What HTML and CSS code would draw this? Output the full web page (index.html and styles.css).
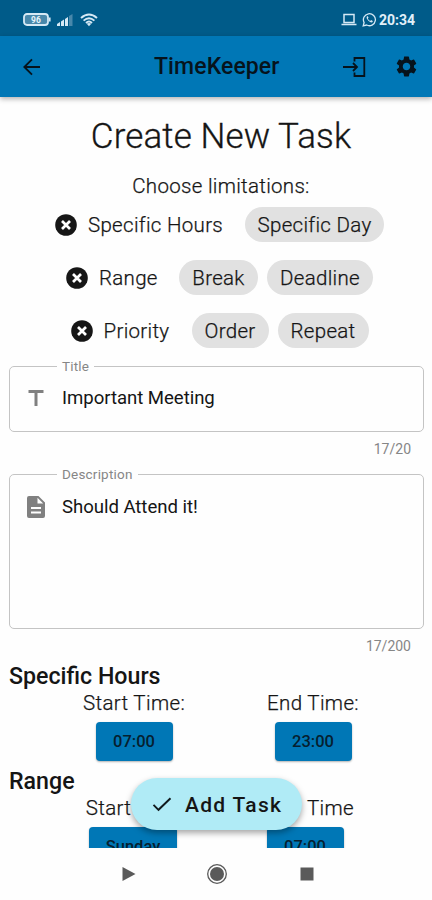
FILE: index.html
```html
<!DOCTYPE html>
<html lang="en">
<head>
<meta charset="utf-8">
<title>TimeKeeper</title>
<link rel="stylesheet" href="styles.css">
</head>
<body>
<div class="phone">
  <div class="status">
    <svg class="battery" width="28" height="13" viewBox="0 0 28 13"><rect x="1" y="1" width="24" height="11" rx="3" fill="#4888ab" stroke="#d5e9f5" stroke-width="1.8"/><path d="M26 4.5h1.6v4H26z" fill="#d5e9f5"/><text x="13" y="9.8" text-anchor="middle" class="battery-text">96</text></svg>
    <svg class="signal" width="16" height="12" viewBox="0 0 16 12"><path d="M0 12V10l3-2v4zM4 12V7.500l3-2V12zM8 12V5l3-2v9z" fill="#d5e9f5"/><path d="M12 12V2l3.500-2v12z" fill="#4888ab"/></svg>
    <svg class="wifi" width="18" height="14" viewBox="0 0 18 14"><g fill="none" stroke="#d5e9f5" stroke-width="1.900"><path d="M1 5Q9-2 17 5"/><path d="M3.600 7.600Q9 3 14.400 7.600"/><path d="M6 10Q9 7.200 12 10"/></g><path d="M6.800 10.800Q9 9.300 11.200 10.800L9 13.200z" fill="#d5e9f5"/></svg>
    <span class="spacer"></span>
    <svg class="laptop" width="16" height="13" viewBox="0 0 16 13"><path d="M3 1.500h10v8H3zM.5 11.500h15" fill="none" stroke="#d5e9f5" stroke-width="1.500"/></svg>
    <svg class="chat" width="15" height="15" viewBox="0 0 15 15"><path d="M1.200 13.800l.9-3.300A6 6 0 1 1 4.600 13z" fill="none" stroke="#d5e9f5" stroke-width="1.300"/><path d="M5.300 4.200c-.8.500-.9 1.600-.2 2.900s1.700 2.300 3 3c1.200.6 2.200.4 2.700-.5l-.1-.7-1.600-.8-.9.900c-1.100-.5-1.900-1.300-2.400-2.400l.7-.8-.6-1.600z" fill="#d5e9f5"/></svg>
    <span class="clock">20:34</span>
  </div>
  <header class="appbar">
    <svg class="back" width="18" height="18" viewBox="0 0 18 18"><path d="M17 9H1.500M9 1.300L1.300 9 9 16.700" fill="none" stroke="#06131c" stroke-width="1.900"/></svg>
    <h1 class="brand">TimeKeeper</h1>
    <svg class="login" width="23" height="20" viewBox="0 0 23 20"><path d="M0 10h14M10 6l4 4-4 4M11.500 4.500V1h9.800v18h-9.800v-3.500" fill="none" stroke="#06131c" stroke-width="1.800"/></svg>
    <svg class="gear" width="25" height="25" viewBox="0 0 24 24"><path fill="#06131c" d="M19.140 12.940c.04-.3.060-.61.060-.94 0-.32-.02-.64-.07-.94l2.030-1.580a.49.490 0 0 0 .12-.61l-1.920-3.320a.488.488 0 0 0-.59-.22l-2.390.96c-.5-.38-1.030-.7-1.620-.94l-.36-2.540a.484.484 0 0 0-.48-.41h-3.840c-.24 0-.43.170-.47.410l-.36 2.540c-.59.240-1.130.570-1.620.940l-2.390-.96c-.22-.08-.47 0-.59.220L2.740 8.870c-.12.210-.08.470.12.610l2.030 1.580c-.05.300-.09.630-.09.940s.02.640.07.940l-2.030 1.580a.49.490 0 0 0-.12.610l1.920 3.320c.12.220.37.290.59.220l2.390-.96c.5.380 1.030.7 1.620.94l.36 2.540c.05.240.24.410.48.410h3.840c.24 0 .44-.17.470-.41l.36-2.540c.59-.24 1.130-.56 1.620-.94l2.390.96c.22.080.47 0 .59-.22l1.920-3.320c.12-.22.070-.47-.12-.61l-2.010-1.580zM12 15.600c-1.980 0-3.600-1.620-3.600-3.600s1.620-3.600 3.600-3.600 3.600 1.620 3.600 3.600-1.620 3.600-3.600 3.600z"/></svg>
  </header>
  <main class="content">
    <h2 class="page-title">Create New Task</h2>
    <p class="hint">Choose limitations:</p>
    <div class="chips row-hours">
      <span class="picked"><svg class="x" viewBox="0 0 22 22"><circle cx="11" cy="11" r="10.800" fill="#161616"/><path d="M7 7l8 8M15 7l-8 8" stroke="#fff" stroke-width="2.700"/></svg><span class="t-hours">Specific Hours</span></span>
      <span class="chip w-day">Specific Day</span>
    </div>
    <div class="chips row-range">
      <span class="picked"><svg class="x" viewBox="0 0 22 22"><circle cx="11" cy="11" r="10.800" fill="#161616"/><path d="M7 7l8 8M15 7l-8 8" stroke="#fff" stroke-width="2.700"/></svg><span class="t-range">Range</span></span>
      <span class="chip w-break">Break</span>
      <span class="chip w-deadline">Deadline</span>
    </div>
    <div class="chips row-priority">
      <span class="picked"><svg class="x" viewBox="0 0 22 22"><circle cx="11" cy="11" r="10.800" fill="#161616"/><path d="M7 7l8 8M15 7l-8 8" stroke="#fff" stroke-width="2.700"/></svg><span class="t-priority">Priority</span></span>
      <span class="chip w-order">Order</span>
      <span class="chip w-repeat">Repeat</span>
    </div>
    <fieldset class="field field-title">
      <legend>Title</legend>
      <div class="entry"><svg width="22" height="22" viewBox="0 0 22 22"><path d="M3.500 3h15v3h-6v13h-3V6h-6z" fill="#808080"/></svg><span>Important Meeting</span></div>
    </fieldset>
    <p class="count count-title">17/20</p>
    <fieldset class="field field-desc">
      <legend>Description</legend>
      <div class="entry"><svg width="22" height="22" viewBox="0 0 22 22"><path fill="#808080" fill-rule="evenodd" d="M4 0h9.500L20 6.500V20a2 2 0 0 1-2 2H4a2 2 0 0 1-2-2V2a2 2 0 0 1 2-2zM12.500 1.800V7.500h5.700zM6 11v2h10v-2zM6 15.500v2h10v-2z"/></svg><span>Should Attend it!</span></div>
    </fieldset>
    <p class="count count-desc">17/200</p>
    <h3 class="section">Specific Hours</h3>
    <div class="times times-hours">
      <div class="col"><span class="time-label">Start Time:</span><button class="btn">07:00</button></div>
      <div class="col"><span class="time-label">End Time:</span><button class="btn">23:00</button></div>
    </div>
    <h3 class="section section-range">Range</h3>
    <div class="times times-range">
      <div class="col"><span class="time-label label-day">Start Day:</span><button class="btn btn-day">Sunday</button></div>
      <div class="col"><span class="time-label label-time">Time</span><button class="btn">07:00</button></div>
    </div>
  </main>
  <button class="fab"><svg width="20" height="15" viewBox="0 0 20 15"><path d="M1.500 7.800L6.500 12.800 18.500 1.200" fill="none" stroke="#10191c" stroke-width="1.900"/></svg><span>Add Task</span></button>
  <nav class="nav">
    <svg width="14" height="16" viewBox="0 0 14 16"><path d="M.5 1l13 7-13 7z" fill="#5a5a5a"/></svg>
    <svg width="22" height="22" viewBox="0 0 22 22"><circle cx="11" cy="11" r="9.300" fill="none" stroke="#5a5a5a" stroke-width="1.300"/><circle cx="11" cy="11" r="7" fill="#5a5a5a"/></svg>
    <svg width="14" height="14" viewBox="0 0 14 14"><path d="M.5.5h13v13H.5z" fill="#5a5a5a"/></svg>
  </nav>
</div>
</body>
</html>
```
FILE: styles.css
```css
* { box-sizing: border-box; }
body { margin: 0; font-family: Roboto, "Liberation Sans", sans-serif; color: #151515; background: #fefefe; }
h1, h2, h3, p { margin: 0; font-weight: 400; }
svg { display: block; flex: none; }
button { font-family: inherit; border: 0; padding: 0; color: inherit; }
.phone { position: relative; width: 432px; height: 900px; display: flex; flex-direction: column; overflow: hidden; }

.status { flex: none; height: 36px; background: #005b89; display: flex; align-items: center; padding: 3px 16px 0 23px; }
.battery-text { font-size: 8.5px; font-weight: 700; fill: #e6f4fb; }
.signal { margin-left: 6px; }
.wifi { margin-left: 7px; }
.spacer { flex: 1; }
.laptop { margin-right: 5px; }
.chat { margin-right: 2px; }
.clock { font-size: 14px; font-weight: 700; color: #e1f0f9; width: 37px; white-space: nowrap; }

.appbar { flex: none; height: 61px; background: #0077b6; display: flex; align-items: center; padding: 0 13px 0 23px; box-shadow: 0 2px 5px rgba(0,0,0,.3); z-index: 1; }
.brand { font-size: 23px; font-weight: 500; color: #06131c; margin-left: 113px; width: 189px; letter-spacing: .1px; }
.gear { margin-left: 28px; }

.content { flex: none; height: 751px; overflow: hidden; padding: 0 8px 0 9px; }
.page-title { margin-top: 15px; height: 48px; line-height: 49px; font-size: 35px; font-weight: 300; text-align: center; letter-spacing: .1px; padding-left: 9px; -webkit-text-stroke: .3px; }
.hint { margin-top: 14px; height: 24px; line-height: 24px; font-size: 20.5px; font-weight: 300; text-align: center; letter-spacing: .3px; padding-left: 9px; -webkit-text-stroke: .25px; }
.chips { display: flex; align-items: center; height: 35px; margin-bottom: 18px; font-size: 20.5px; font-weight: 300; letter-spacing: .3px; white-space: nowrap; gap: 9px; -webkit-text-stroke: .25px; }
.row-hours { margin-top: 9px; padding-left: 46px; }
.row-range { padding-left: 57px; }
.row-priority { padding-left: 61.5px; }
.picked { display: flex; align-items: center; gap: 11px; margin-right: 13px; }
.x { width: 22px; height: 22px; }
.t-hours { width: 135px; }
.t-range { width: 58px; }
.t-priority { width: 66px; }
.chip { height: 35px; line-height: 37px; border-radius: 18px; background: #e1e1e1; text-align: center; }
.w-day { width: 139px; }
.w-break { width: 79px; }
.w-deadline { width: 106px; }
.w-order { width: 77px; }
.w-repeat { width: 91px; }

.field { margin: 0; padding: 0 15px; border: 1.5px solid #c4c4c4; border-radius: 5px; min-width: 0; width: 415px; }
.field legend { margin-left: 32px; padding: 0 5px; font-size: 13.5px; line-height: 16px; height: 16px; color: #868686; letter-spacing: .2px; }
.field-title { margin-top: -8px; height: 74px; }
.field-desc { height: 163px; margin-top: 8px; }
.entry { display: flex; align-items: center; gap: 15px; height: 22px; margin-top: 13px; font-size: 18.6px; white-space: nowrap; letter-spacing: -.05px; }
.field-desc .entry { margin-top: 14px; }
.count { text-align: right; font-size: 14px; height: 18px; line-height: 18px; margin-top: 8px; padding-right: 13px; color: #868686; }

.section { margin-top: 7px; height: 28px; line-height: 28px; font-size: 23.2px; font-weight: 500; }
.section-range { margin-top: 6px; }
.times { display: flex; }
.times-hours { padding-left: 70px; gap: 69px; }
.times-range { padding-left: 69px; gap: 62px; }
.col { width: 110px; display: flex; flex-direction: column; align-items: center; }
.time-label { height: 26px; line-height: 26px; font-size: 20.5px; font-weight: 300; letter-spacing: .35px; white-space: nowrap; -webkit-text-stroke: .25px; }
.label-day { padding-right: 4px; }
.label-time { align-self: flex-end; padding-right: 6px; }
.btn { margin-top: 6px; width: 77px; height: 39px; border-radius: 4px; background: #0077b6; font-size: 16.5px; font-weight: 500; color: #06202f; box-shadow: 0 1px 2px rgba(0,0,0,.3); }
.btn-day { width: 88px; }

.fab { position: absolute; left: 131px; top: 778px; width: 171px; height: 52px; border-radius: 26px; background: #b0ebf6; display: flex; align-items: center; padding: 1px 0 0 21px; gap: 13px; font-size: 21px; font-weight: 500; letter-spacing: 1.3px; white-space: nowrap; box-shadow: 0 3px 6px rgba(0,0,0,.35); }

.nav { flex: 1; background: #fefefe; display: flex; align-items: center; padding-left: 122px; }
.nav svg + svg { margin-left: 70px; }
.nav svg:last-child { margin-left: 72px; }
```
